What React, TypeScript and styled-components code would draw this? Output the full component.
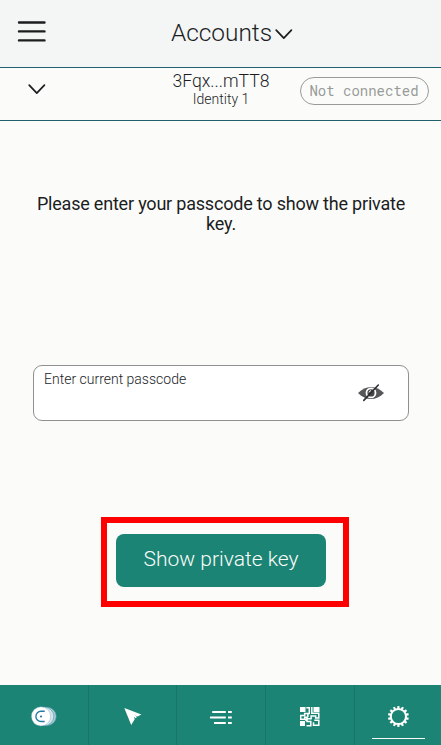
import React from 'react';
import styled, { createGlobalStyle } from 'styled-components';

const GlobalStyle = createGlobalStyle`
  *, *::before, *::after { box-sizing: border-box; }
  body { margin: 0; background: #fbfcfa; }
  button, input { font: inherit; }
`;

const Screen = styled.div`
  display: flex;
  flex-direction: column;
  width: 441px;
  height: 745px;
  background: #fbfcfa;
  color: #1c1d1f;
  font-family: Roboto, 'Liberation Sans', sans-serif;
  font-weight: 300;
  overflow: hidden;
`;

const Header = styled.header`
  display: grid;
  grid-template-columns: 64px 1fr 44px;
  height: 68px;
  background: #f3f6f5;
  border-bottom: 1px solid #20606f;
`;

const PlainButton = styled.button`
  display: flex;
  padding: 0;
  border: 0;
  background: none;
  color: inherit;
  font-weight: inherit;
`;

const MenuButton = styled(PlainButton)`
  padding: 20px 0 0 17px;
`;

const TitleButton = styled(PlainButton)`
  justify-content: center;
  gap: 3px;
  padding: 19px 0 0 3px;
  font-size: 24.4px;
  line-height: 28px;

  svg { margin-top: 9px; }
`;

const AccountBar = styled.section`
  display: grid;
  grid-template-columns: 150px 142px 1fr;
  height: 53px;
  border-bottom: 1px solid #20606f;
`;

const ExpandButton = styled(PlainButton)`
  padding: 15px 0 0 28px;
`;

const Identity = styled.div`
  display: flex;
  flex-direction: column;
  align-items: center;
  padding-top: 3px;
`;

const Address = styled.span`
  font-size: 17.6px;
  line-height: 20px;
`;

const IdentityName = styled.span`
  font-size: 14px;
  line-height: 16px;
`;

const Status = styled.span`
  justify-self: end;
  width: 129px;
  height: 28px;
  margin: 9px 12px 0 0;
  padding-right: 1px;
  border: 1px solid #999b99;
  border-radius: 14px;
  color: #999b99;
  font: 400 14px/26px 'Roboto Mono', 'Liberation Mono', monospace;
  text-align: center;
  white-space: nowrap;
`;

const Main = styled.main`
  flex: 1;
  display: flex;
  flex-direction: column;
  align-items: center;
  padding: 73px 32px 0 33px;
`;

const Prompt = styled.p`
  width: 376px;
  height: 40px;
  margin: 0 0 131px;
  font-size: 18px;
  font-weight: 400;
  letter-spacing: -0.2px;
  line-height: 20px;
  text-align: center;
`;

const Field = styled.label`
  display: grid;
  grid-template-columns: 1fr 28px;
  width: 376px;
  height: 56px;
  padding: 0 23px 0 10px;
  border: 1px solid #8f918f;
  border-radius: 9px;
  background: #fff;
`;

const FieldText = styled.div`
  display: flex;
  flex-direction: column;
  padding-top: 5px;
`;

const FieldLabel = styled.span`
  font-size: 14px;
  line-height: 17px;
`;

const PasscodeInput = styled.input`
  height: 28px;
  padding: 0;
  border: 0;
  outline: 0;
  background: transparent;
`;

const Highlight = styled.div`
  width: 248px;
  height: 90px;
  margin-top: 96px;
  margin-left: 8px;
  padding: 11px 0 0 9px;
  border: 6px solid #fe0000;
`;

const SubmitButton = styled.button`
  display: block;
  width: 210px;
  height: 53px;
  padding: 0 0 3px;
  border: 0;
  border-radius: 8px;
  background: #1b8474;
  color: #fbfcfa;
  font-size: 21px;
  font-weight: 300;
`;

const TabBar = styled.nav`
  display: grid;
  grid-template-columns: 89px 88px 89px 89px 86px;
  height: 60px;
  background: #1b8474;
`;

const Tab = styled.button<{ $active?: boolean }>`
  display: flex;
  flex-direction: column;
  align-items: center;
  justify-content: space-between;
  padding: 20px 0 6px;
  border: 0;
  border-right: ${({ $active }) => ($active ? '0' : '1px solid #197567')};
  background: none;
  color: #fbfcfa;

  &::after {
    content: '';
    width: 53px;
    height: 1px;
    margin-left: 1px;
    background: ${({ $active }) => ($active ? '#fbfcfa' : 'transparent')};
  }
`;

const MenuIcon = () => (
  <svg width="29" height="24" viewBox="0 0 29 24" stroke="#1c1d1f" strokeWidth="2.4" strokeLinecap="round">
    <path d="M2 2.5h25.5M2 11.4h25.5M2 20.4h25.5" />
  </svg>
);

const Chevron = () => (
  <svg width="18" height="12" viewBox="0 0 18 12" fill="none" stroke="#1c1d1f" strokeWidth="1.7" strokeLinecap="round" strokeLinejoin="round">
    <path d="M1.2 2.1 8.8 10.2l7.6-8.1" />
  </svg>
);

const HiddenEye = styled.svg`
  margin-top: 17px;
`;

const HiddenEyeIcon = () => (
  <HiddenEye width="28" height="20" viewBox="0 0 28 20" fill="none">
    <path d="M1 9.9C5 5.9 9.4 3.9 14 3.9s9 2 13 6c-4 4-8.4 6-13 6s-9-2-13-6Z" fill="#555758" />
    <circle cx="14" cy="9.9" r="4.5" fill="#444647" stroke="#fff" strokeWidth="1.8" />
    <path d="M12 9.4c.3-1 1-1.6 2-1.8" stroke="#fff" strokeWidth="1" />
    <path d="M6.8 17.4 21.3 2" stroke="#2c2d2f" strokeWidth="1.6" strokeLinecap="round" />
  </HiddenEye>
);

const CoinsIcon = () => (
  <svg width="26" height="22" viewBox="0 0 26 22">
    <circle cx="16.1" cy="11.4" r="9.1" fill="#a9ccd4" stroke="#609db0" strokeWidth=".6" />
    <circle cx="13.5" cy="11.4" r="9.3" fill="#d3e5ea" stroke="#5092ac" strokeWidth=".6" />
    <circle cx="10" cy="11.4" r="9.6" fill="#fff" stroke="#71a9b8" strokeWidth=".4" />
    <path d="M13.7 6.3H10a5.1 5.1 0 0 0 0 10.2h3.7" fill="none" stroke="#277ba0" strokeWidth="1.4" />
    <circle cx="10" cy="11.5" r="1.1" fill="#277ba0" />
  </svg>
);

const SendIcon = () => (
  <svg width="20" height="22" viewBox="0 0 20 22" fill="#fff">
    <path d="M1.3 2.9 18.4 9.4 14.6 11.6 12 10.4 10.9 11.5 11.7 14.2 8.2 20Z" />
    <path d="M10.2 9.8 13.3 12.6" stroke="#fff" strokeWidth="1.9" />
  </svg>
);

const ActivityIcon = () => (
  <svg width="24" height="22" viewBox="0 0 24 22" stroke="#fff" strokeWidth="1.8">
    <path d="M3.2 7h13.6M1 12.5h15.8M5 18h11.8M19 7h3.8M19 12.5h3.8M19 18h3.8" />
  </svg>
);

const CodeIcon = () => (
  <svg width="21" height="22" viewBox="0.5 0 21 22" fill="#fff">
    <path d="M0.5 2H6v5H0.5zM14 2h6v5h-6zM0.5 16h5v5h-5z" />
    <path
      d="M6.8 2.7h3v5.8H5.2v2H1.2v3.8h4v-2h3.2M12.3 2v6.2H19.3V13h-3.1v-2h-4.6v2.7H7.5v2.8h3.8v4.3H7M14.8 15.2h4.5V20.3H14v-3M8.4 8.5V12M3 14.3h3.5v1.8"
      fill="none"
      stroke="#fff"
      strokeWidth="1.5"
    />
  </svg>
);

const GEAR_TEETH = Array.from({ length: 14 }, (_, i) => (i * 360) / 14);

const GearIcon = () => (
  <svg width="22" height="23" viewBox="0 0 22 23">
    <circle cx="11.4" cy="11.5" r="7.6" fill="none" stroke="#fff" strokeWidth="2" />
    {GEAR_TEETH.map((angle) => (
      <rect key={angle} x="10.3" y="1.1" width="2.2" height="3" fill="#fff" transform={`rotate(${angle} 11.4 11.5)`} />
    ))}
  </svg>
);

export default function App() {
  return (
    <Screen>
      <GlobalStyle />
      <Header>
        <MenuButton aria-label="Menu"><MenuIcon /></MenuButton>
        <TitleButton>Accounts<Chevron /></TitleButton>
      </Header>
      <AccountBar>
        <ExpandButton aria-label="Expand account"><Chevron /></ExpandButton>
        <Identity>
          <Address>3Fqx...mTT8</Address>
          <IdentityName>Identity 1</IdentityName>
        </Identity>
        <Status>Not connected</Status>
      </AccountBar>
      <Main>
        <Prompt>Please enter your passcode to show the private key.</Prompt>
        <Field>
          <FieldText>
            <FieldLabel>Enter current passcode</FieldLabel>
            <PasscodeInput type="password" />
          </FieldText>
          <HiddenEyeIcon />
        </Field>
        <Highlight>
          <SubmitButton>Show private key</SubmitButton>
        </Highlight>
      </Main>
      <TabBar>
        <Tab aria-label="Accounts"><CoinsIcon /></Tab>
        <Tab aria-label="Send"><SendIcon /></Tab>
        <Tab aria-label="Activity"><ActivityIcon /></Tab>
        <Tab aria-label="Receive"><CodeIcon /></Tab>
        <Tab $active aria-label="Settings"><GearIcon /></Tab>
      </TabBar>
    </Screen>
  );
}
